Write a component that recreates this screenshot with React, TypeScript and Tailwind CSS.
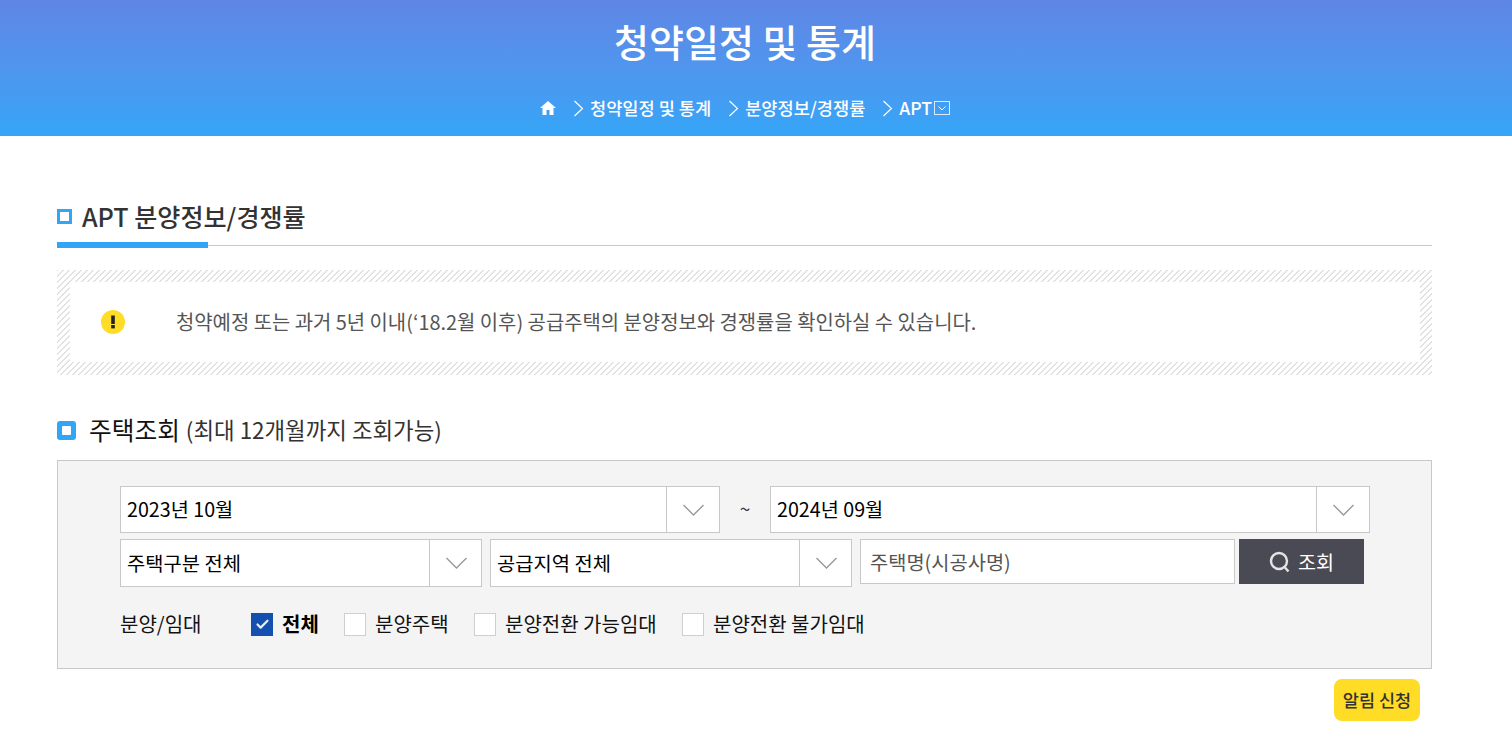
import { Check } from 'lucide-react';

const FONT = "font-['Noto_Sans_CJK_KR','Noto_Sans',sans-serif]";

const Chevron = () => (
  <svg className="w-[21px] h-[12px]" viewBox="0 0 21 12" fill="none" stroke="#999" strokeWidth="1.4">
    <path d="M0.5 1 L10.5 11 L20.5 1" />
  </svg>
);

const Crumb = () => (
  <svg className="w-[11px] h-[17px] mr-[6px]" viewBox="0 0 11 17" fill="none" stroke="white" strokeWidth="1.2">
    <path d="M1.5 1 L9.5 8.5 L1.5 16" />
  </svg>
);

const SelectBox = ({ label, className, arrow, labelClass }: { label: string; className: string; arrow: string; labelClass: string }) => (
  <div className={`flex bg-white border border-[#c8c8c8] text-black ${className}`}>
    <div className={`flex-1 flex items-center pl-[6px] ${labelClass}`}>{label}</div>
    <div className={`border-l border-[#c8c8c8] flex items-center justify-center ${arrow}`}>
      <Chevron />
    </div>
  </div>
);

const CheckItem = ({ label, checked, className }: { label: string; checked?: boolean; className: string }) => (
  <label className={`flex items-center text-[20px] ${className}`}>
    {checked ? (
      <span className="w-[22px] h-[23px] bg-[#1450b0] flex items-center justify-center">
        <Check className="w-[15px] h-[15px] text-[#e8eef8]" strokeWidth={3.5} />
      </span>
    ) : (
      <span className="w-[22px] h-[23px] bg-white border border-[#cfcfcf]" />
    )}
    <span className={`ml-[9px] ${checked ? 'font-bold text-black' : 'text-[#111]'}`}>{label}</span>
  </label>
);

export default function App() {
  return (
    <div className={`h-[729px] overflow-hidden bg-white ${FONT}`}>
      {/* Top banner */}
      <header className="h-[136px] pr-[22px] bg-gradient-to-b from-[#5f86e5] to-[#33a5f7] text-white flex flex-col items-center">
        <h1 className="mt-[16px] text-[38px] leading-[50px] font-medium">청약일정 및 통계</h1>
        <nav className="mt-[30px] flex items-center text-[17.6px] leading-[24px] font-medium">
          <svg className="w-[16px] h-[14px] mr-[17px]" viewBox="0 0 16 14" fill="white">
            <path d="M8 0 L16 7 L13.5 7 L13.5 14 L9.5 14 L9.5 9 L6.5 9 L6.5 14 L2.5 14 L2.5 7 L0 7 Z" />
          </svg>
          <Crumb />
          <span className="mr-[17px]">청약일정 및 통계</span>
          <Crumb />
          <span className="mr-[17px]">분양정보/경쟁률</span>
          <Crumb />
          <span>APT</span>
          <span className="ml-[2px] w-[16px] h-[14px] border border-white/80 flex items-center justify-center">
            <svg className="w-[8px] h-[5px]" viewBox="0 0 8 5" fill="none" stroke="white" strokeWidth="1">
              <path d="M0.5 0.5 L4 4 L7.5 0.5" />
            </svg>
          </span>
        </nav>
      </header>

      <main className="pl-[57px] pr-[80px]">
        {/* Section title */}
        <div className="mt-[64px] h-[46px] border-b border-[#c8c8c8] relative flex items-start">
          <span className="mt-[9px] w-[15px] h-[15px] border-[3px] border-[#33a5f7] bg-white" />
          <h2 className="ml-[10px] text-[25.1px] leading-[32px] font-medium text-[#333]">APT 분양정보/경쟁률</h2>
          <span className="absolute left-0 bottom-[-3px] w-[151px] h-[6px] bg-[#33a5f7]" />
        </div>

        {/* Notice */}
        <div className="mt-[24px] h-[105px] pt-[12px] pb-[13px] pl-[13px] pr-[12px] bg-[repeating-linear-gradient(135deg,#e2e2e2_0,#e2e2e2_1.4px,#ffffff_1.4px,#ffffff_4.24px)]">
          <div className="h-full bg-white flex items-center pl-[31px]">
            <span className="w-6 h-6 rounded-full bg-[#ffdc25] flex items-center justify-center">
              <svg className="w-2 h-[14px]" viewBox="0 0 8 14" fill="#222">
                <rect x="2.2" y="0.5" width="3.6" height="8.5" />
                <rect x="2.2" y="10" width="3.6" height="3.4" />
              </svg>
            </span>
            <p className="ml-[51px] text-[19.9px] text-[#555]">
              청약예정 또는 과거 5년 이내(‘18.2월 이후) 공급주택의 분양정보와 경쟁률을 확인하실 수 있습니다.
            </p>
          </div>
        </div>

        {/* Search heading */}
        <div className="mt-[37px] flex items-center h-[36px]">
          <span className="w-[19px] h-[19px] rounded-[3px] bg-[#33a5f7] flex items-center justify-center">
            <span className="w-[9px] h-[9px] bg-white rounded-[1px]" />
          </span>
          <h3 className="ml-[13px] text-[24.7px] text-[#111]">주택조회</h3>
          <span className="ml-[6px] text-[22.4px] text-[#333]">(최대 12개월까지 조회가능)</span>
        </div>

        {/* Search panel */}
        <div className="mt-[12px] h-[209px] bg-[#f4f4f4] border border-[#c8c8c8] pl-[62px] pt-[25px]">
          <div className="flex items-center">
            <SelectBox label="2023년 10월" arrow="w-[53px]" labelClass="pb-[2px] text-[19.7px]" className="w-[600px] h-[47px]" />
            <span className="w-[50px] pb-[2px] text-center text-[19px] text-[#333]">~</span>
            <SelectBox label="2024년 09월" arrow="w-[53px]" labelClass="pb-[2px] text-[19.7px]" className="w-[600px] h-[47px]" />
          </div>
          <div className="mt-[6px] flex items-start">
            <SelectBox label="주택구분 전체" arrow="w-[52px] pl-[2px]" labelClass="text-[19.85px]" className="w-[362px] h-[48px]" />
            <SelectBox label="공급지역 전체" arrow="w-[52px] pl-[2px]" labelClass="text-[19.85px]" className="ml-[8px] w-[362px] h-[48px]" />
            <div className="ml-[8px] w-[375px] h-[45px] bg-white border border-[#c8c8c8] flex items-center pl-[9px] text-[19.8px] text-[#555]">
              주택명(시공사명)
            </div>
            <button className="ml-[4px] w-[125px] h-[45px] bg-[#4a4a54] text-white text-[19.6px] flex items-center justify-center">
              <svg className="w-[21px] h-[22px] mr-[8px]" viewBox="0 0 21 22" fill="none" stroke="#e4e4e4" strokeWidth="2.4">
                <circle cx="10" cy="10" r="8" />
                <path d="M15.5 16 L19.5 20.5" />
              </svg>
              조회
            </button>
          </div>
          <div className="mt-[22px] flex items-center">
            <span className="w-[131px] text-[20px] text-[#111]">분양/임대</span>
            <CheckItem label="전체" checked className="w-[93px]" />
            <CheckItem label="분양주택" className="w-[130px]" />
            <CheckItem label="분양전환 가능임대" className="w-[208px]" />
            <CheckItem label="분양전환 불가임대" className="" />
          </div>
        </div>

        {/* Alert */}
        <div className="mt-[10px] flex justify-end pr-[12px]">
          <button className="w-[86px] h-[42px] rounded-[8px] bg-[#ffdc25] text-[17.5px] font-medium text-[#333]">알림 신청</button>
        </div>
      </main>
    </div>
  );
}
